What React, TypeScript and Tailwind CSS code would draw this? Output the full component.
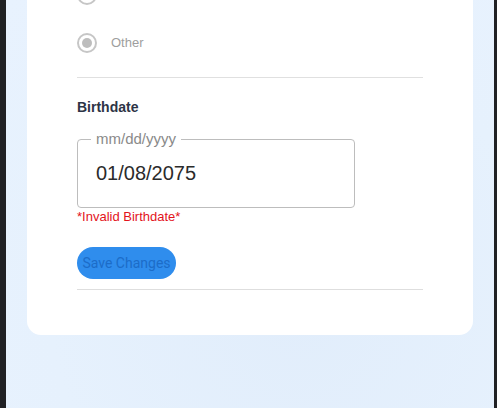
import React from "react";

function Radio({ checked }: { checked?: boolean }) {
  return (
    <div className="w-[20px] h-[20px] rounded-full border-2 border-[#c6c6c6] flex items-center justify-center shrink-0">
      {checked && <div className="w-[10px] h-[10px] rounded-full bg-[#bdbdbd]" />}
    </div>
  );
}

export default function App() {
  return (
    <div
      className="w-[497px] h-[408px] flex overflow-hidden"
      style={{ fontFamily: '"Liberation Sans", Arial, sans-serif' }}
    >
      <div className="w-[6px] bg-[#202124] shrink-0" />
      <div className="flex-1 bg-[radial-gradient(ellipse_at_60%_75%,#e1edfb_0%,#e6f1fd_60%,#e8f2fe_100%)] overflow-hidden">
        <div className="mx-[21px] bg-white rounded-b-[14px] px-[50px] pb-[45px] -mt-[15px] pt-0">
          <div className="flex flex-col gap-[28px]">
            <div className="flex items-center gap-[14px] h-[20px]">
              <Radio />
            </div>
            <div className="flex items-center gap-[14px] h-[20px]">
              <Radio checked />
              <span className="text-[13px] text-[#9e9e9e]">Other</span>
            </div>
          </div>
          <div className="mt-[24px] h-px bg-[#e0e0e0]" />
          <div className="mt-[21px] text-[14px] leading-[16px] font-bold text-[#2d3446]">
            Birthdate
          </div>
          <fieldset className="mt-[15px] w-[278px] border border-[#bdbdbd] rounded-[4px] px-[13px]">
            <legend className="px-[5px] text-[15px] leading-[18px] text-[#8a8a8a]">mm/dd/yyyy</legend>
            <div className="pt-[13px] pb-[22px] pl-[5px] text-[20px] leading-[24px] text-[#2b2b2b]">
              01/08/2075
            </div>
          </fieldset>
          <div className="mt-[1px] text-[13px] leading-[16px] text-[#e3131b]">*Invalid Birthdate*</div>
          <button
            className="mt-[22px] w-[99px] h-[32px] rounded-full bg-[#2f8ded] text-[14px] text-[#1c6cc8] flex items-center justify-center"
            style={{ fontFamily: 'Roboto, "Liberation Sans", sans-serif' }}
          >
            Save Changes
          </button>
          <div className="mt-[10px] h-px bg-[#dedede]" />
        </div>
      </div>
      <div className="w-[3px] bg-[#202124] shrink-0" />
    </div>
  );
}
